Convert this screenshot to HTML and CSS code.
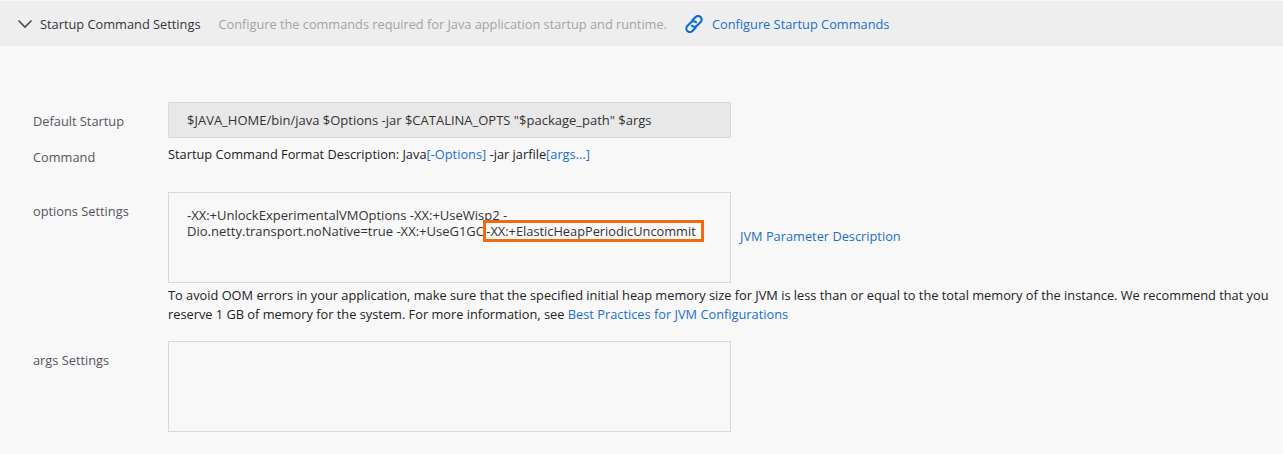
FILE: index.html
```html
<!DOCTYPE html>
<html lang="en">
<head>
  <meta charset="UTF-8" />
  <title>Startup Command Settings</title>
  <link rel="stylesheet" href="styles.css">
</head>
<body>

  <!-- Section header -->
  <div class="section-header">
    <svg class="chevron" width="16" height="10" viewBox="0 0 16 10"><path d="M1.5 1.5 L8 8 L14.5 1.5" fill="none" stroke="#4a4a55" stroke-width="1.6"/></svg>
    <span class="section-title">Startup Command Settings</span>
    <span class="section-desc">Configure the commands required for Java application startup and runtime.</span>
    <svg class="link-icon" width="18" height="18" viewBox="2 2 16 16" fill="none" stroke="#0a6ccf" stroke-width="1.9" stroke-linecap="round">
      <path d="M8.6 6.6 L11.4 3.8 a3.1 3.1 0 0 1 4.5 4.4 L12.6 11.5 a3.1 3.1 0 0 1 -4.4 0"/>
      <path d="M11.4 13.4 L8.6 16.2 a3.1 3.1 0 0 1 -4.5 -4.4 L7.4 8.5 a3.1 3.1 0 0 1 4.4 0"/>
    </svg>
    <a class="link" href="#">Configure Startup Commands</a>
  </div>

  <div class="form">
    <div class="form-row row-default">
      <div class="row-label tall">Default Startup Command</div>
      <div class="row-body">
        <div class="field field-readonly">$JAVA_HOME/bin/java $Options -jar $CATALINA_OPTS "$package_path" $args</div>
        <p class="hint hint-format">Startup Command Format Description: Java<a class="link" href="#">[-Options]</a> -jar jarfile<a class="link" href="#">[args...]</a></p>
      </div>
    </div>

    <div class="form-row row-options">
      <div class="row-label">options Settings</div>
      <div class="row-body">
        <div class="field-line">
          <div class="field field-area">-XX:+UnlockExperimentalVMOptions -XX:+UseWisp2 -<br>Dio.netty.transport.noNative=true -XX:+UseG1GC <span class="highlight">-XX:+ElasticHeapPeriodicUncommit</span></div>
          <a class="link param-link" href="#">JVM Parameter Description</a>
        </div>
        <p class="hint hint-note">To avoid OOM errors in your application, make sure that the specified initial heap memory size for JVM is less than or equal to the total memory of the instance. We recommend that you reserve 1 GB of memory for the system. For more information, see <a class="link" href="#">Best Practices for JVM Configurations</a></p>
      </div>
    </div>

    <div class="form-row row-args">
      <div class="row-label">args Settings</div>
      <div class="row-body">
        <div class="field field-area"></div>
      </div>
    </div>
  </div>

</body>
</html>
```

FILE: styles.css
```css
/* Reset and base font */
* {
  margin: 0;
  padding: 0;
  box-sizing: border-box;
  font-family: "Open Sans", "Noto Sans", sans-serif;
}
body {
  background-color: #f8f8f8;
  font-size: 12.8px;
  color: #222;
  overflow: hidden;
}
.link {
  color: #1a6fc9;
  text-decoration: none;
}

/* Section header */
.section-header {
  display: flex;
  align-items: center;
  height: 45px;
  margin-top: 1px;
  padding: 1px 0 0 17px;
  background-color: #eeeeee;
}
.chevron {
  margin-right: 7px;
}
.section-title {
  color: #333340;
  margin-right: 18px;
}
.section-desc {
  color: #a3a3a3;
  font-size: 12.75px;
  margin-right: 18px;
}
.link-icon {
  margin-right: 9px;
}

/* Form */
.form {
  padding: 56px 0 0 33px;
}
.form-row {
  display: grid;
  grid-template-columns: 135px 1fr;
}
.row-label {
  color: #55555f;
  padding-top: 10px;
  line-height: 18px;
}
.row-label.tall {
  line-height: 36px;
  padding-top: 1px;
  width: 100px;
}
.field {
  width: 563px;
  border: 1px solid #d8d8d8;
  color: #333;
  font-size: 13px;
}
.field-readonly {
  height: 36px;
  line-height: 34px;
  padding-left: 18px;
  background-color: #e8e8e8;
}
.field-area {
  height: 91px;
  padding: 14px 18px;
  line-height: 16px;
}
.field-line {
  display: flex;
  align-items: center;
}
.param-link {
  margin: -4px 0 0 9px;
}
.highlight {
  display: inline-block;
  font-size: 12.8px;
  line-height: 16px;
  outline: 3px solid #f26a0f;
  margin-left: -1px;
  padding-right: 5px;
}
.hint {
  color: #222;
  line-height: 19px;
}
.hint-format {
  margin-top: 7px;
}
.row-options {
  margin-top: 17px;
}
.hint-note {
  margin-top: 3px;
  width: 1105px;
}
.row-args {
  margin-top: 17px;
}
```
